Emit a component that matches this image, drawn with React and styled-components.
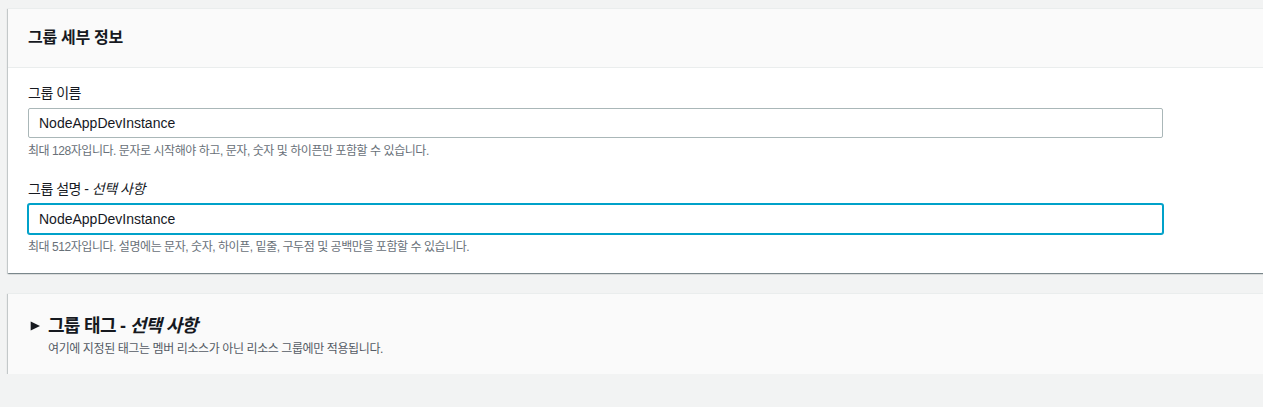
import React from "react";
import styled, { createGlobalStyle } from "styled-components";

const Global = createGlobalStyle`
  html, body { background: #f2f3f3; }
  body {
    margin: 8px 0 0 0;
    overflow-x: hidden;
    font-family: "Liberation Sans", "Noto Sans CJK KR", sans-serif;
    color: #16191f;
  }
`;

const Page = styled.div`
  display: flex;
  flex-direction: column;
  gap: 20px;
  padding-left: 8px;
  margin-right: -20px;
`;

const Card = styled.section`
  background: ${(p) => (p.$muted ? "#fafafa" : "#ffffff")};
  border-top: 1px solid #eaeded;
  box-shadow: 0 1px 1px 0 rgba(0, 28, 36, 0.3), 1px 1px 1px 0 rgba(0, 28, 36, 0.15),
    -1px 1px 1px 0 rgba(0, 28, 36, 0.15);
`;

const CardHeader = styled.header`
  background: #fafafa;
  border-bottom: 1px solid #eaeded;
  padding: 18px 20px;
`;

const Title = styled.h2`
  margin: 0;
  font-size: 16px;
  line-height: 22px;
  font-weight: 700;
  letter-spacing: -0.3px;
`;

const CardBody = styled.div`
  padding: 15px 20px 18px;
  display: flex;
  flex-direction: column;
  gap: 20px;
`;

const Field = styled.div`
  display: flex;
  flex-direction: column;
`;

const Label = styled.label`
  font-size: 14px;
  line-height: 20px;
  margin-bottom: 5px;
  letter-spacing: -0.5px;
  em { font-style: italic; }
`;

const Input = styled.input`
  box-sizing: border-box;
  width: 1135px;
  height: 30px;
  padding: 4px 10px;
  font-family: "Liberation Sans", "Noto Sans CJK KR", sans-serif;
  font-size: 14px;
  color: #16191f;
  background: #fff;
  border: 1px solid ${(p) => (p.$focused ? "#00a1c9" : "#aab7b8")};
  border-radius: 2px;
  box-shadow: ${(p) => (p.$focused ? "0 0 0 1px #00a1c9" : "none")};
  outline: none;
`;

const Hint = styled.div`
  margin-top: 5px;
  font-size: 12px;
  line-height: 16px;
  color: #687078;
  letter-spacing: -0.45px;
`;

const Expander = styled.div`
  padding: 21px 20px 17px;
`;

const ExpanderHead = styled.div`
  display: flex;
  align-items: center;
  gap: 8px;
`;

const ExpanderTitle = styled.h2`
  margin: 0;
  font-size: 18px;
  line-height: 22px;
  font-weight: 700;
  letter-spacing: -0.7px;
  em { font-style: italic; }
`;

const ExpanderDesc = styled.p`
  margin: 4px 0 0 20px;
  font-size: 12px;
  line-height: 16px;
  color: #545b64;
  letter-spacing: -0.4px;
`;

const Caret = () => (
  <svg width="12" height="12" viewBox="0 0 12 12" aria-hidden="true">
    <path d="M2.7 1.5 L12 6 L2.7 10.5 Z" fill="#16191f" />
  </svg>
);

export default function App() {
  return (
    <>
      <Global />
      <Page>
        <Card>
          <CardHeader>
            <Title>그룹 세부 정보</Title>
          </CardHeader>
          <CardBody>
            <Field>
              <Label>그룹 이름</Label>
              <Input defaultValue="NodeAppDevInstance" />
              <Hint>최대 128자입니다. 문자로 시작해야 하고, 문자, 숫자 및 하이픈만 포함할 수 있습니다.</Hint>
            </Field>
            <Field>
              <Label>
                그룹 설명 - <em>선택 사항</em>
              </Label>
              <Input $focused defaultValue="NodeAppDevInstance" />
              <Hint>최대 512자입니다. 설명에는 문자, 숫자, 하이픈, 밑줄, 구두점 및 공백만을 포함할 수 있습니다.</Hint>
            </Field>
          </CardBody>
        </Card>
        <Card $muted>
          <Expander>
            <ExpanderHead>
              <Caret />
              <ExpanderTitle>
                그룹 태그 - <em>선택 사항</em>
              </ExpanderTitle>
            </ExpanderHead>
            <ExpanderDesc>여기에 지정된 태그는 멤버 리소스가 아닌 리소스 그룹에만 적용됩니다.</ExpanderDesc>
          </Expander>
        </Card>
      </Page>
    </>
  );
}
